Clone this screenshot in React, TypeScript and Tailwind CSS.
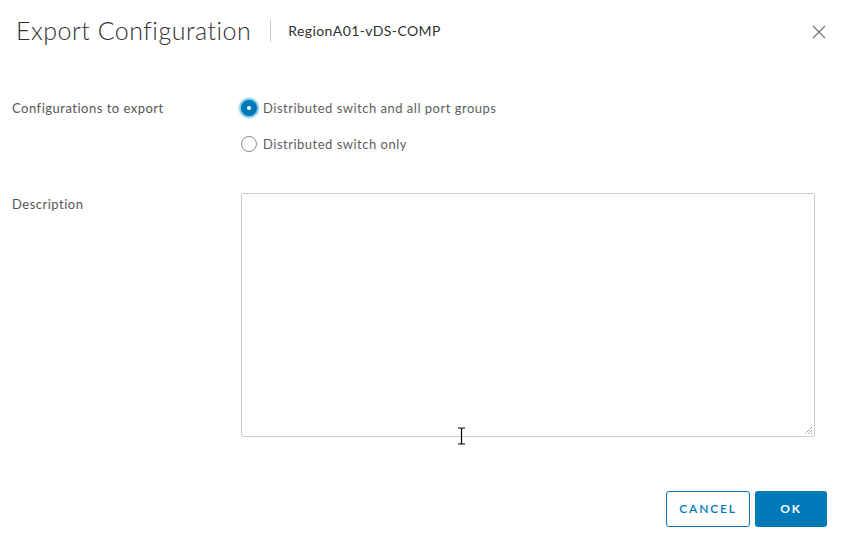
import React from "react";

export default function App() {
  return (
    <div
      className="relative w-[847px] h-[548px] bg-white text-[#565656] overflow-hidden"
      style={{ fontFamily: "Lato, 'Open Sans', sans-serif" }}
    >
      {/* Header */}
      <div className="flex items-center h-[61px] pl-[16px] pr-[20px]">
        <div className="text-[25px] font-light text-[#313131] tracking-[0.5px] leading-none">
          Export Configuration
        </div>
        <div className="w-px h-[22px] bg-[#cccccc] ml-[19px] mr-[17px]" />
        <div className="text-[14px] text-[#313131] tracking-[0.4px] leading-none">RegionA01-vDS-COMP</div>
        <div className="flex-1" />
        <svg width="16" height="16" viewBox="0 0 16 16" className="mt-[2px]">
          <path d="M2 2 L14 14 M14 2 L2 14" stroke="#737373" strokeWidth="1.3" />
        </svg>
      </div>

      {/* Body */}
      <div className="pl-[12px] pt-[38px]">
        <div className="flex">
          <div className="w-[229px] text-[13px] leading-[18px] tracking-[0.5px]">Configurations to export</div>
          <div className="flex flex-col gap-[18px]">
            <label className="flex items-center gap-[6px] text-[13px] leading-[18px] tracking-[0.5px] text-[#5e5e5e]">
              <span className="w-[16px] h-[16px] rounded-full bg-[#0079b8] flex items-center justify-center shadow-[0_0_2px_2px_#6bc1e3]">
                <span className="w-[4px] h-[4px] rounded-full bg-white" />
              </span>
              Distributed switch and all port groups
            </label>
            <label className="flex items-center gap-[6px] text-[13px] leading-[18px] tracking-[0.5px] text-[#5e5e5e]">
              <span className="w-[16px] h-[16px] rounded-full border border-[#8c8c8c] bg-white" />
              Distributed switch only
            </label>
          </div>
        </div>

        <div className="flex mt-[40px]">
          <div className="w-[229px] text-[13px] leading-[18px] pt-[2px] tracking-[0.5px]">Description</div>
          <div className="relative w-[574px] h-[244px] border border-[#cccccc] rounded-[2px]">
            <svg width="10" height="10" viewBox="0 0 10 10" className="absolute right-[1px] bottom-[1px]">
              <path d="M9 2 L2 9 M9 5 L5 9 M9 8 L8 9" stroke="#666" strokeWidth="1" strokeDasharray="1 1" />
            </svg>
          </div>
        </div>
      </div>

      {/* Footer */}
      <div className="absolute right-[20px] bottom-[21px] flex gap-[5px]">
        <button className="w-[84px] h-[36px] border border-[#0079b8] rounded-[3px] text-[#0079b8] text-[12px] font-semibold tracking-[1.8px]">
          CANCEL
        </button>
        <button className="w-[72px] h-[36px] bg-[#0079b8] rounded-[3px] text-white text-[12px] font-bold tracking-[1.8px]">
          OK
        </button>
      </div>

      {/* mouse cursor */}
      <svg width="9" height="18" viewBox="0 0 9 18" className="absolute left-[457px] top-[427px]">
        <path d="M1 1 H3.5 Q4.5 1 4.5 2 V16 Q4.5 17 3.5 17 H1 M8 1 H5.5 Q4.5 1 4.5 2 M4.5 16 Q4.5 17 5.5 17 H8" stroke="#000" strokeWidth="1.2" fill="none" />
      </svg>
    </div>
  );
}
